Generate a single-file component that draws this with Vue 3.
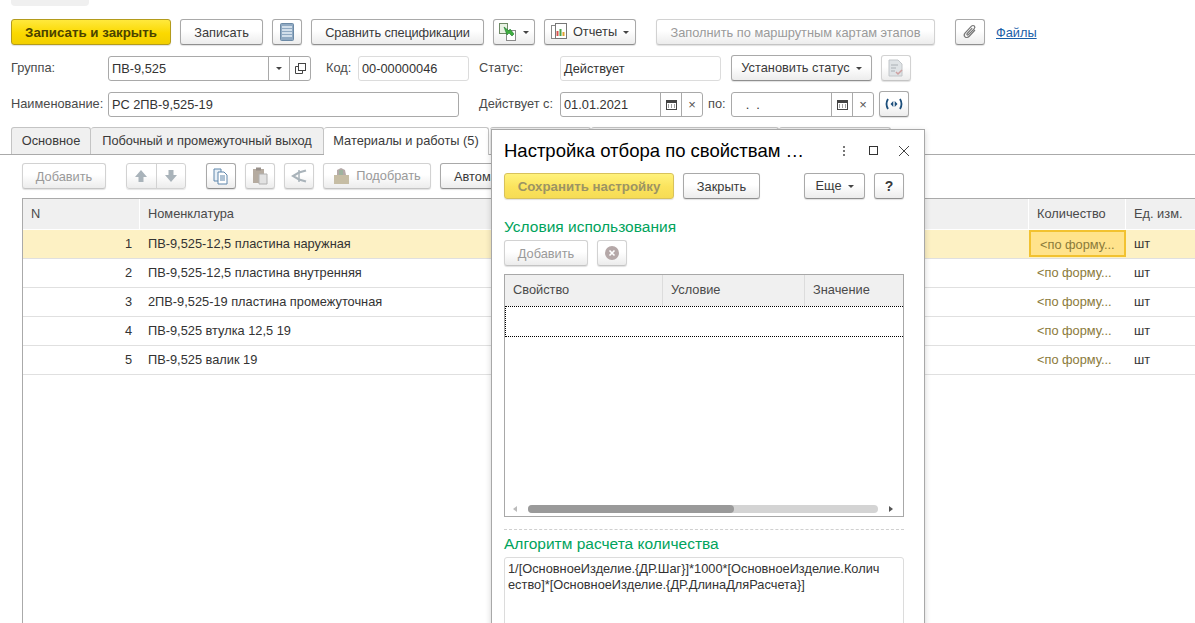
<template>
  <div class="page">
    <div class="top-stub"></div>

    <div class="toolbar">
      <button class="btn btn-main w-160">Записать и закрыть</button>
      <button class="btn w-83">Записать</button>
      <button class="btn btn-icon">
        <svg width="14" height="18" viewBox="0 0 14 18"><rect x="0.5" y="0.5" width="13" height="17" rx="1" fill="#8fa9c2" stroke="#6c8aa6"/><path d="M2 4h10M2 7h10M2 10h10M2 13h10" stroke="#e8f0f7" stroke-width="1.4"/></svg>
      </button>
      <button class="btn w-173 tight">Сравнить спецификации</button>
      <button class="btn w-42 btn-split">
        <svg width="18" height="18" viewBox="0 0 18 18"><rect x="0.5" y="0.5" width="8" height="10" fill="#e9f2e4" stroke="#6f8a66"/><rect x="7.5" y="7.5" width="9" height="10" fill="#fff" stroke="#8a8a8a"/><path d="M5 4l5 4 1-2 4 5-2 2-3-3-2 2z" fill="#3fae3f" stroke="#1f7a2f" stroke-width=".6"/></svg>
        <i class="caret"></i>
      </button>
      <button class="btn w-92 btn-split">
        <svg width="16" height="18" viewBox="0 0 16 18"><rect x="0.5" y="2.5" width="10" height="13" fill="#fff" stroke="#8a8a8a"/><rect x="4.5" y="0.5" width="11" height="15" fill="#fff" stroke="#777"/><path d="M6.5 13V8" stroke="#d9534f" stroke-width="2"/><path d="M9.5 13V6" stroke="#4ba34b" stroke-width="2"/><path d="M12.5 13V9" stroke="#e0a030" stroke-width="2"/></svg>
        <span class="btn-text">Отчеты</span>
        <i class="caret"></i>
      </button>
      <button class="btn off w-279 ml-11">Заполнить по маршрутным картам этапов</button>
      <button class="btn btn-icon ml-11">
        <svg width="16" height="18" viewBox="0 0 16 18" fill="none"><path d="M13 7l-6 6.5c-1.2 1.3-3 1.3-4 .3s-1-2.7.2-4l6.3-6.6c.9-.9 2.1-.9 2.8-.2s.7 1.9-.2 2.8L6.400 11.700c-.4.400-1 .4-1.300.1s-.3-.9.100-1.300l5-5.300" stroke="#777" stroke-width="1.200"/></svg>
      </button>
      <a class="files-link">Файлы</a>
    </div>

    <div class="form-row row-a">
      <label class="lbl w-97">Группа:</label>
      <div class="field w-203">
        <span class="val">ПВ-9,525</span>
        <span class="fbtn"><i class="caret"></i></span>
        <span class="fbtn">
          <svg width="11" height="11" viewBox="0 0 11 11" fill="none" stroke="#444"><rect x="3.500" y="0.500" width="7" height="7"/><path d="M3 3.500H0.500V10.500H7.500V8"/></svg>
        </span>
      </div>
      <label class="lbl lbl-code">Код:</label>
      <div class="field field-ro w-111"><span class="val">00-00000046</span></div>
      <label class="lbl lbl-status">Статус:</label>
      <div class="field field-ro w-161"><span class="val">Действует</span></div>
      <button class="btn btn-split btn-status">
        <span class="btn-text">Установить статус</span>
        <i class="caret"></i>
      </button>
      <button class="btn off btn-icon ml-9">
        <svg width="16" height="18" viewBox="0 0 16 18"><path d="M1 1h9l4 4v12H1z" fill="#dfe3e6" stroke="#c2c6c9"/><path d="M3 6h7M3 9h5M3 12h4" stroke="#aab0b5"/><path d="M8 13l2 2 4-4" stroke="#cfa0a0" stroke-width="1.500" fill="none"/></svg>
      </button>
    </div>

    <div class="form-row row-b">
      <label class="lbl w-97">Наименование:</label>
      <div class="field w-351"><span class="val">РС 2ПВ-9,525-19</span></div>
      <label class="lbl lbl-from">Действует с:</label>
      <div class="field w-143">
        <span class="val">01.01.2021</span>
        <span class="fbtn"><svg width="11" height="11" viewBox="0 0 11 11"><rect x="0.500" y="1.500" width="10" height="9" fill="#fff" stroke="#444"/><rect x="0" y="1" width="11" height="3" fill="#444"/><path d="M2 6h1M5 6h1M8 6h1M2 8h1M5 8h1M8 8h1" stroke="#444"/></svg></span>
        <span class="fbtn fclear">×</span>
      </div>
      <label class="lbl lbl-to">по:</label>
      <div class="field w-143">
        <span class="val">&nbsp;&nbsp;&nbsp;.&nbsp;&nbsp;.</span>
        <span class="fbtn"><svg width="11" height="11" viewBox="0 0 11 11"><rect x="0.500" y="1.500" width="10" height="9" fill="#fff" stroke="#444"/><rect x="0" y="1" width="11" height="3" fill="#444"/><path d="M2 6h1M5 6h1M8 6h1M2 8h1M5 8h1M8 8h1" stroke="#444"/></svg></span>
        <span class="fbtn fclear">×</span>
      </div>
      <button class="btn btn-icon btn-period">
        <svg width="18" height="12" viewBox="0 0 18 12" fill="none"><path d="M3 1C1.200 4 1.200 8 3 11M15 1c1.800 3 1.800 7 0 10" stroke="#1d4f7c" stroke-width="1.800"/><path d="M8.300 3L5.500 6l2.800 3zM9.700 3l2.800 3-2.800 3z" fill="#1d4f7c"/></svg>
      </button>
    </div>

    <div class="tabs">
      <div class="tab w-80">Основное</div>
      <div class="tab w-233">Побочный и промежуточный выход</div>
      <div class="tab tab-active">Материалы и работы (5)</div>
      <div class="tab tab-back1"></div>
      <div class="tab tab-back2"></div>
      <div class="tab tab-back3"></div>
    </div>

    <div class="tab-body">
      <div class="toolbar2">
        <button class="btn off w-84">Добавить</button>
        <div class="arrow-group">
          <span class="arrow-cell"><svg width="14" height="14" viewBox="0 0 14 14"><path d="M7 1l6 7H9.500v5h-5V8H1z" fill="#a9b3ba"/></svg></span>
          <span class="arrow-cell"><svg width="14" height="14" viewBox="0 0 14 14"><path d="M7 13L1 6h3.500V1h5v5H13z" fill="#a9b3ba"/></svg></span>
        </div>
        <button class="btn btn-icon ml-11">
          <svg width="16" height="17" viewBox="0 0 16 17"><path d="M1 1h7v12H1z" fill="#e8f0f7" stroke="#5f86ab"/><path d="M5 4h6l3 3v9H5z" fill="#fff" stroke="#5f86ab"/><path d="M7 8h5M7 10h5M7 12h5" stroke="#5f86ab"/></svg>
        </button>
        <button class="btn off btn-icon">
          <svg width="16" height="18" viewBox="0 0 16 18"><rect x="1" y="2" width="11" height="14" fill="#b5aba0"/><rect x="4" y="0.500" width="5" height="3" fill="#98908a"/><path d="M7 7h8v10H7z" fill="#e2e2e2" stroke="#b0b0b0"/></svg>
        </button>
        <button class="btn off btn-icon">
          <svg width="16" height="14" viewBox="0 0 16 14" fill="none"><path d="M15 1.500L8 3.500 2 7l6 3.500 7 2" stroke="#a9b3ba" stroke-width="2.200"/><path d="M8 1v12" stroke="#a9b3ba" stroke-width="1.500"/></svg>
        </button>
        <button class="btn off w-108 btn-split">
          <svg width="17" height="18" viewBox="0 0 17 18"><path d="M1 8h15v9H1z" fill="#c6bda4"/><path d="M4 8V3l4-2 4 2 1 5z" fill="#b5aaa8"/><rect x="6" y="3" width="4" height="5" fill="#9fb39f"/></svg>
          <span class="btn-text">Подобрать</span>
        </button>
        <button class="btn btn-auto">Автоматически</button>
      </div>

      <div class="grid-table">
        <div class="grid-row grid-head">
          <div class="cell c-n">N</div>
          <div class="cell c-name">Номенклатура</div>
          <div class="cell c-qty">Количество</div>
          <div class="cell c-unit">Ед. изм.</div>
        </div>
        <div
          v-for="(row, i) in rows"
          :key="row"
          :class="['grid-row', { 'row-current': i === 0 }]"
        >
          <div class="cell c-n num">{{ i + 1 }}</div>
          <div class="cell c-name">{{ row }}</div>
          <div :class="['cell', 'c-qty', 'qty', { 'qty-current': i === 0 }]">&lt;по форму...</div>
          <div class="cell c-unit">шт</div>
        </div>
      </div>
    </div>

    <div class="modal">
      <div class="modal-title">
        <span class="title-text">Настройка отбора по свойствам …</span>
        <span class="win-btns">
          <svg width="12" height="12" viewBox="0 0 12 12"><path d="M6 1v2M6 5v2M6 9v2" stroke="#777" stroke-width="2"/></svg>
          <svg width="12" height="12" viewBox="0 0 12 12" fill="none"><rect x="1.500" y="1.500" width="8" height="8" stroke="#333"/></svg>
          <svg width="12" height="12" viewBox="0 0 12 12" fill="none"><path d="M1 1l10 10M11 1L1 11" stroke="#444"/></svg>
        </span>
      </div>

      <div class="modal-tools">
        <button class="btn btn-main btn-main-off w-170">Сохранить настройку</button>
        <button class="btn w-77">Закрыть</button>
        <span class="spacer"></span>
        <button class="btn btn-split btn-more">
          <span class="btn-text">Еще</span>
          <i class="caret"></i>
        </button>
        <button class="btn btn-icon btn-help">?</button>
      </div>

      <h4 class="sec-title">Условия использования</h4>
      <div class="cond-tools">
        <button class="btn off w-84">Добавить</button>
        <button class="btn off btn-icon">
          <svg width="14" height="14" viewBox="0 0 14 14"><circle cx="7" cy="7" r="7" fill="#b5a8a8"/><path d="M4.500 4.500l5 5M9.500 4.500l-5 5" stroke="#fff" stroke-width="1.600"/></svg>
        </button>
      </div>

      <div class="cond-table">
        <div class="cond-head">
          <div class="cond-cell c1">Свойство</div>
          <div class="cond-cell c2">Условие</div>
          <div class="cond-cell c3">Значение</div>
        </div>
        <div class="cond-empty"></div>
        <div class="scrollbar">
          <i class="sb-left"></i>
          <div class="sb-track"><div class="sb-thumb"></div></div>
          <i class="sb-right"></i>
        </div>
      </div>

      <div class="dash"></div>
      <h4 class="sec-title sec-algo">Алгоритм расчета количества</h4>
      <div class="algo">1/[ОсновноеИзделие.{ДР.Шаг}]*1000*[ОсновноеИзделие.Количество]*[ОсновноеИзделие.{ДР.ДлинаДляРасчета}]</div>
    </div>
  </div>
</template>

<script setup>
const rows = [
  'ПВ-9,525-12,5 пластина наружная',
  'ПВ-9,525-12,5 пластина внутренняя',
  '2ПВ-9,525-19 пластина промежуточная',
  'ПВ-9,525 втулка 12,5 19',
  'ПВ-9,525 валик 19'
]
</script>

<style scoped>
.page {
  position: relative;
  width: 1195px;
  height: 623px;
  overflow: hidden;
  background: #fff;
  font-family: "Liberation Sans", Arial, sans-serif;
  font-size: 12.8px;
  color: #3a3a3a;
}

.top-stub {
  width: 78px;
  height: 6px;
  margin-left: 11px;
  background: #f0f0f0;
  border-radius: 0 0 4px 4px;
}

.toolbar {
  display: flex;
  align-items: center;
  gap: 9px;
  margin: 13px 0 0 11px;
  height: 26px;
}

.btn {
  display: inline-flex;
  align-items: center;
  justify-content: center;
  flex: none;
  height: 26px;
  padding: 0;
  box-sizing: border-box;
  font: inherit;
  color: #3a3a3a;
  background: linear-gradient(#fff, #fff 45%, #ececec);
  border: 1px solid #a9a9a9;
  border-bottom-color: #8f8f8f;
  border-radius: 3px;
  box-shadow: 0 1px 1px rgba(0, 0, 0, 0.12);
}

.btn.off {
  color: #9a9a9a;
  border-color: #d2d2d2;
  border-bottom-color: #c4c4c4;
}

.tight { letter-spacing: -0.15px; }

.btn-main {
  font-size: 13.300px;
  font-weight: 700;
  color: #4a4300;
  background: linear-gradient(#ffe93d, #fbd900 55%, #f2cf00);
  border-color: #b39b1c;
}

.btn-main-off {
  color: #9c9464;
  background: linear-gradient(#fff27c, #fbe35c 55%, #f6dc55);
  border-color: #d8c25c;
}

.btn-icon { width: 30px; }
.btn-split { gap: 6px; }
.btn-text { line-height: 1; }

.btn-auto {
  width: 140px;
  justify-content: flex-start;
  padding-left: 13px;
}

.w-42 { width: 42px; }
.w-77 { width: 77px; }
.w-80 { width: 80px; }
.w-83 { width: 83px; }
.w-84 { width: 84px; }
.w-92 { width: 92px; }
.w-97 { width: 97px; }
.w-108 { width: 108px; }
.w-111 { width: 111px; }
.w-143 { width: 143px; }
.w-160 { width: 160px; }
.w-161 { width: 161px; }
.w-170 { width: 170px; }
.w-173 { width: 173px; }
.w-203 { width: 203px; }
.w-233 { width: 233px; }
.w-279 { width: 279px; }
.w-351 { width: 351px; }
.ml-9 { margin-left: 9px; }
.ml-11 { margin-left: 11px; }

.caret {
  display: inline-block;
  width: 0;
  height: 0;
  border-left: 3px solid transparent;
  border-right: 3px solid transparent;
  border-top: 3px solid #444;
}

.files-link {
  margin-left: 2px;
  color: #1a5ea8;
  text-decoration: underline;
}

.form-row {
  display: flex;
  align-items: flex-end;
  height: 26px;
  margin-left: 11px;
  margin-top: 10px;
}

.lbl {
  flex: none;
  height: 25px;
  line-height: 24px;
  color: #4a4a4a;
  white-space: nowrap;
}

.lbl-code { width: 32px; margin-left: 15px; }
.lbl-status { width: 81px; margin-left: 10px; }
.lbl-from { width: 81px; margin-left: 20px; }
.lbl-to { width: 23px; margin-left: 5px; }

.field {
  display: flex;
  flex: none;
  align-items: stretch;
  height: 25px;
  box-sizing: border-box;
  background: #fff;
  border: 1px solid #a9a9a9;
  border-radius: 3px;
}

.field-ro { border-color: #dcdcdc; }

.val {
  flex: 1;
  padding-left: 3px;
  line-height: 23px;
  color: #333;
  white-space: nowrap;
}

.fbtn {
  display: flex;
  align-items: center;
  justify-content: center;
  flex: none;
  width: 20px;
  border-left: 1px solid #a9a9a9;
}

.fclear {
  color: #555;
  font-size: 13px;
}

.btn-status {
  width: 141px;
  margin-left: 10px;
}

.btn-period { margin-left: 5px; }

.tabs {
  display: flex;
  height: 28px;
  margin-top: 10px;
  padding-left: 11px;
  box-sizing: border-box;
  border-bottom: 1px solid #aaa;
}

.tab {
  flex: none;
  height: 27px;
  box-sizing: border-box;
  line-height: 26px;
  text-align: center;
  white-space: nowrap;
  background: #f0f0f0;
  border: 1px solid #c4c4c4;
  border-bottom: none;
  border-left-width: 0;
  border-radius: 3px 3px 0 0;
  color: #3a3a3a;
}

.tab:first-child { border-left-width: 1px; }

.tab-active {
  width: 165px;
  height: 28px;
  background: #fff;
}

.tab-back1 { width: 101px; margin-left: 1px; }
.tab-back2 { width: 188px; }
.tab-back3 { width: 112px; }

.tab-body {
  padding: 8px 0 0 22px;
}

.toolbar2 {
  display: flex;
  gap: 9px;
  height: 26px;
}

.arrow-group {
  display: flex;
  flex: none;
  width: 60px;
  height: 26px;
  margin-left: 11px;
  box-sizing: border-box;
  background: linear-gradient(#fff, #fff 45%, #ececec);
  border: 1px solid #d2d2d2;
  border-radius: 3px;
  box-shadow: 0 1px 1px rgba(0, 0, 0, 0.1);
}

.arrow-cell {
  display: flex;
  flex: 1;
  align-items: center;
  justify-content: center;
}

.arrow-cell + .arrow-cell { border-left: 1px solid #d2d2d2; }

.grid-table {
  margin-top: 9px;
  height: 440px;
  border-top: 1px solid #aaa;
  border-left: 1px solid #aaa;
}

.grid-row {
  display: flex;
  height: 29px;
  box-sizing: border-box;
  border-bottom: 1px solid #e0e0e0;
}

.grid-head {
  height: 31px;
  background: #f0f0f0;
  border-bottom: none;
}

.row-current { background: #fdf1c4; }

.cell {
  flex: none;
  box-sizing: border-box;
  padding-left: 8px;
  line-height: 28px;
  white-space: nowrap;
  overflow: hidden;
  color: #333;
}

.grid-head .cell {
  line-height: 30px;
  color: #4a4a4a;
  border-right: 1px solid #fff;
  border-bottom: 1px solid #fff;
}

.c-n { width: 117px; }
.c-name { width: 889px; }
.c-qty { width: 97px; }
.c-unit { width: 70px; }

.num {
  padding: 0 8px 0 0;
  text-align: right;
}

.qty { color: #8a7a3a; }

.qty-current {
  height: 27px;
  line-height: 25px;
  padding-left: 9px;
  background: #ffe38c;
  border: 2px solid #f2c230;
}

.modal {
  position: absolute;
  left: 491px;
  top: 129px;
  width: 434px;
  height: 520px;
  box-sizing: border-box;
  padding: 0 20px 0 12px;
  background: #fff;
  border: 1px solid #a8a8a8;
  box-shadow: 0 2px 6px rgba(0, 0, 0, 0.18);
}

.modal-title {
  display: flex;
  align-items: center;
  justify-content: space-between;
  height: 42px;
}

.title-text {
  font-size: 18.500px;
  color: #000;
  white-space: nowrap;
}

.win-btns {
  display: flex;
  gap: 18px;
  margin-right: -6px;
}

.modal-tools {
  display: flex;
  gap: 9px;
  height: 26px;
  margin-top: 1px;
}

.spacer { flex: 1; }

.btn-more { width: 61px; }

.btn-help {
  font-size: 14px;
  font-weight: 700;
}

.sec-title {
  margin: 19px 0 0;
  height: 18px;
  font-size: 15.500px;
  font-weight: 400;
  line-height: 18px;
  color: #00a35c;
}

.cond-tools {
  display: flex;
  gap: 9px;
  height: 26px;
  margin-top: 4px;
}

.cond-table {
  display: flex;
  flex-direction: column;
  width: 400px;
  height: 243px;
  margin-top: 8px;
  box-sizing: border-box;
  border: 1px solid #a8a8a8;
}

.cond-head {
  display: flex;
  flex: none;
  height: 31px;
  background: #f0f0f0;
}

.cond-cell {
  flex: none;
  box-sizing: border-box;
  padding-left: 8px;
  line-height: 29px;
  color: #4a4a4a;
  border-right: 1px solid #dcdcdc;
}

.c1 { width: 158px; }
.c2 { width: 142px; }
.c3 { width: 98px; border-right: none; }

.cond-empty {
  flex: none;
  height: 31px;
  box-sizing: border-box;
  border-top: 1px dotted #000;
  border-bottom: 1px dotted #000;
  border-left: 1px dotted #000;
}

.scrollbar {
  display: flex;
  align-items: center;
  height: 9px;
  margin-top: auto;
  margin-bottom: 3px;
  padding: 0 10px 0 8px;
  gap: 8px;
}

.sb-left, .sb-right {
  flex: none;
  width: 0;
  height: 0;
  border-top: 3px solid transparent;
  border-bottom: 3px solid transparent;
}

.sb-left { border-right: 4px solid #bbb; margin-right: 3px; }
.sb-right { border-left: 4px solid #555; margin-left: 3px; }

.sb-track {
  flex: 1;
  height: 8px;
  background: #d4d4d4;
  border-radius: 4px;
}

.sb-thumb {
  width: 206px;
  height: 8px;
  background: #9a9a9a;
  border-radius: 4px;
}

.dash {
  width: 400px;
  margin-top: 12px;
  border-top: 1px dashed #d0d0d0;
}

.sec-algo { margin-top: 5px; }

.algo {
  width: 400px;
  height: 100px;
  margin-top: 4px;
  padding: 3px 22px 2px 3px;
  box-sizing: border-box;
  line-height: 16px;
  color: #333;
  word-break: break-all;
  border: 1px solid #dcdcdc;
  border-radius: 3px;
}
</style>
